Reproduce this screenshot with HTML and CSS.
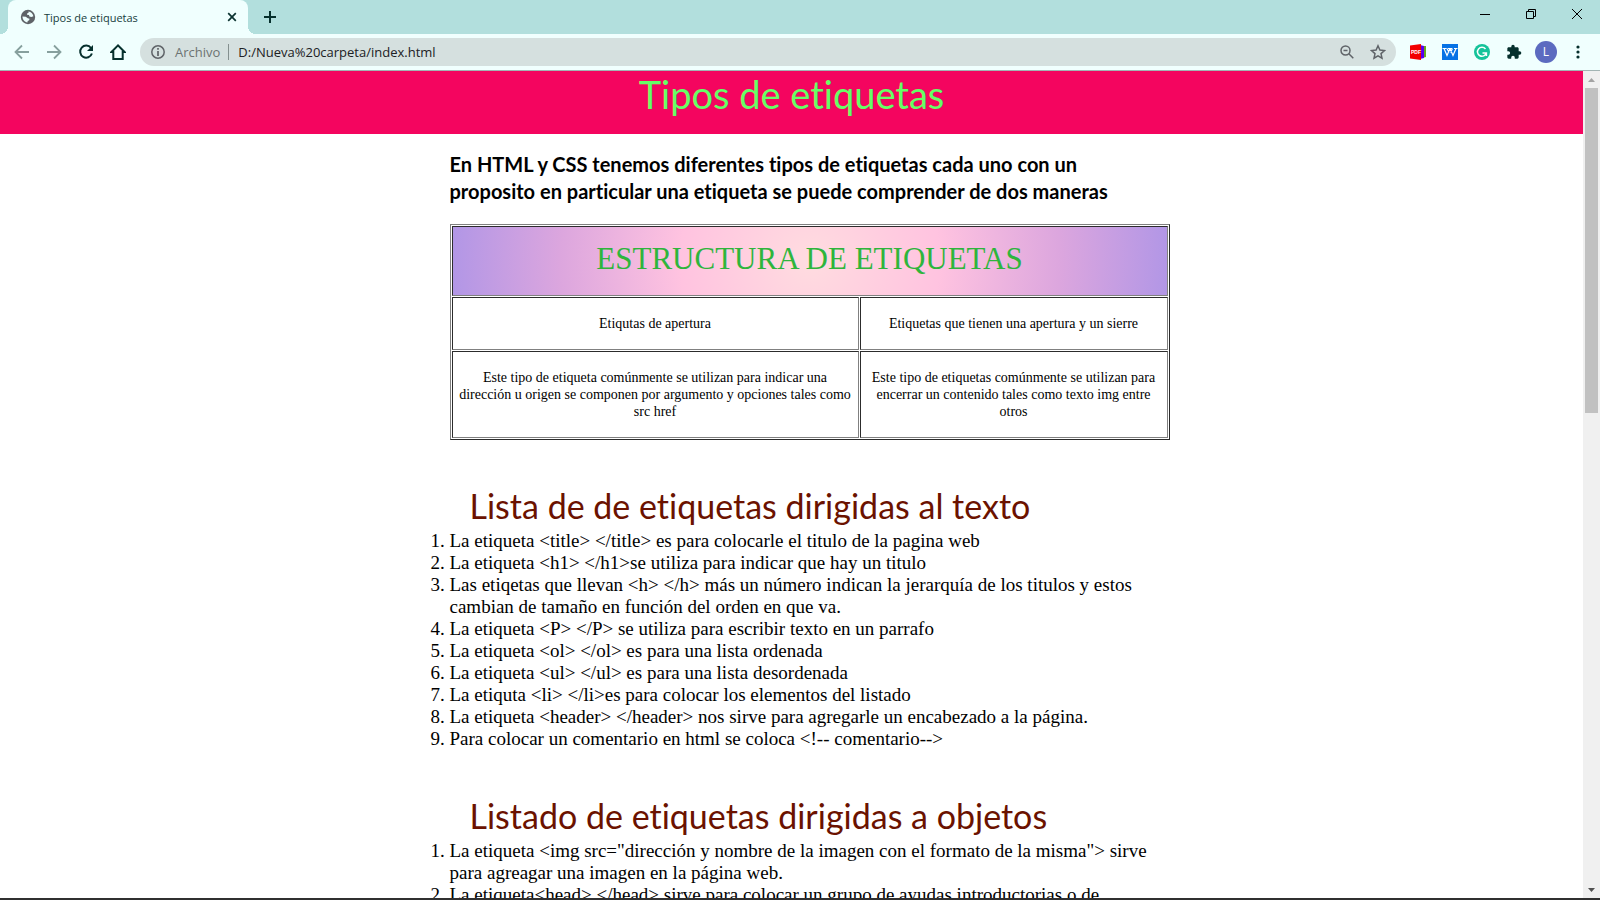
FILE: index.html
```html
<!DOCTYPE html>
<html lang="es">
<head>
<meta charset="utf-8">
<title>Tipos de etiquetas</title>
<link rel="stylesheet" href="styles.css">
</head>
<body>
<div class="browser">
  <div class="tabstrip">
    <div class="tab">
      <svg class="globe" viewBox="0 0 16 16" width="16" height="16"><circle cx="8" cy="8" r="7.200" fill="#5f6368"/><path d="M8.500 2.600c2.400.3 4.400 2.200 4.900 4.600l-2 .9-2-.5-.4-1.500-2-.3.3-1.600 1.300-.5zM2.500 7.500l3.300.2 2 1.600 1.700.4-.3 1.600-1.500.6-.3 1.500C4.700 13 2.500 10.700 2.500 7.500z" fill="#eefffe"/></svg>
      <span class="tab-title">Tipos de etiquetas</span>
      <button class="tab-close" aria-label="Cerrar pestaña"><svg viewBox="0 0 10 10" width="10" height="10"><path d="M1.200 1.200l7.600 7.600M8.800 1.200L1.200 8.800" stroke="#0b3330" stroke-width="1.700"/></svg></button>
    </div>
    <button class="new-tab" aria-label="Nueva pestaña"><svg viewBox="0 0 12 12" width="12" height="12"><path d="M6 0v12M0 6h12" stroke="#06302d" stroke-width="2"/></svg></button>
    <div class="window-controls">
      <button aria-label="Minimizar"><svg viewBox="0 0 10 10" width="10" height="10"><path d="M0 5.500h10" stroke="#000"/></svg></button>
      <button aria-label="Restaurar"><svg viewBox="0 0 10 10" width="10" height="10"><path d="M.5 2.500h7v7h-7zM2.500 2.500v-2h7v7h-2" fill="none" stroke="#000"/></svg></button>
      <button aria-label="Cerrar"><svg viewBox="0 0 10 10" width="10" height="10"><path d="M0 0l10 10M10 0L0 10" stroke="#000"/></svg></button>
    </div>
  </div>

  <div class="toolbar">
    <div class="nav">
      <button aria-label="Atrás"><svg viewBox="0 0 16 16" width="16" height="16"><path d="M15 8H2M8 1.500L1.500 8 8 14.500" fill="none" stroke="#87a09e" stroke-width="1.800"/></svg></button>
      <button aria-label="Adelante"><svg viewBox="0 0 16 16" width="16" height="16"><path d="M1 8h13M8 1.500L14.500 8 8 14.500" fill="none" stroke="#87a09e" stroke-width="1.800"/></svg></button>
      <button aria-label="Volver a cargar"><svg viewBox="0 0 16 16" width="16" height="16"><path d="M13 4A6 6 0 1 0 13.900 9.500" fill="none" stroke="#06302d" stroke-width="2"/><path d="M15 1v6H9z" fill="#06302d"/></svg></button>
      <button aria-label="Página principal"><svg viewBox="0 0 16 16" width="16" height="16"><path d="M8 1.400L1.500 8H3.300v7h9.400V8h1.800z" fill="none" stroke="#06302d" stroke-width="2"/></svg></button>
    </div>
    <div class="omnibox">
      <svg viewBox="0 0 14 14" width="14" height="14"><circle cx="7" cy="7" r="6.200" fill="none" stroke="#5f6368" stroke-width="1.500"/><path d="M7 3v1.700M7 6v5" stroke="#5f6368" stroke-width="1.700"/></svg>
      <label class="scheme" for="url">Archivo</label>
      <input class="url" id="url" type="text" value="D:/Nueva%20carpeta/index.html">
      <button aria-label="Zoom"><svg viewBox="0 0 14 14" width="14" height="14"><circle cx="5.500" cy="5.500" r="4.500" fill="none" stroke="#5f6368" stroke-width="1.500"/><path d="M3.500 5.500h4M8.800 8.800l4.500 4.500" stroke="#5f6368" stroke-width="1.500"/></svg></button>
      <button aria-label="Añadir a marcadores"><svg viewBox="0 0 16 16" width="16" height="16"><path d="M8 1.800l1.900 4.300 4.600.4-3.500 3.100 1 4.600L8 11.800l-4 2.400 1-4.600L1.500 6.500l4.600-.4z" fill="none" stroke="#5f6368" stroke-width="1.500"/></svg></button>
    </div>
    <div class="extensions">
      <button aria-label="Extensión PDF"><svg viewBox="0 0 16 16" width="16" height="16"><path d="M12 2h4v11l-4 1z" fill="#69a81c"/><path d="M10 1l4 1v12l-4 1z" fill="#5a00ee"/><path d="M0 1.500L11 0v16L0 14.500z" fill="#f20000"/><text x="1" y="10" font-size="5" class="pdf">PDF</text></svg></button>
      <button aria-label="Traductor"><svg viewBox="0 0 16 16" width="16" height="16"><path d="M0 0h16v16H0z" fill="#0772e5"/><path d="M.5 4.500h4M6 4.500h4M12 4.500h3.500M2 4.500l3 7 3-7M5 4.500l2 4M8 4.500l3 7 3-7M8.500 8.500l2-4" fill="none" stroke="#fff" stroke-width="1.200"/></svg></button>
      <button aria-label="Corrector"><svg viewBox="0 0 16 16" width="16" height="16"><circle cx="8" cy="8" r="8" fill="#15c39a"/><path d="M11.500 5A4.500 4.500 0 1 0 12.300 9H8.500M12.400 8.500V12" fill="none" stroke="#fff" stroke-width="1.500"/></svg></button>
      <button aria-label="Extensiones"><svg viewBox="0 0 24 24" width="16" height="16"><path fill="#06302d" d="M20.500 11H19V7c0-1.100-.9-2-2-2h-4V3.500a2.500 2.500 0 0 0-5 0V5H4c-1.100 0-2 .9-2 2v3.800h1.500a2.700 2.700 0 0 1 0 5.400H2V20c0 1.100.9 2 2 2h3.800v-1.500a2.700 2.700 0 0 1 5.400 0V22H17c1.100 0 2-.9 2-2v-4h1.500a2.500 2.500 0 0 0 0-5z"/></svg></button>
      <button aria-label="Perfil"><span class="avatar">L</span></button>
      <button aria-label="Menú"><svg viewBox="0 0 4 14" width="4" height="14"><circle cx="2" cy="2" r="1.600" fill="#06302d"/><circle cx="2" cy="7" r="1.600" fill="#06302d"/><circle cx="2" cy="12" r="1.600" fill="#06302d"/></svg></button>
    </div>
  </div>

  <div class="viewport">
    <div class="page">
      <header class="banner"><h1>Tipos de etiquetas</h1></header>
      <main class="content">
        <h2 class="intro">En HTML y CSS tenemos diferentes tipos de etiquetas cada uno con un<br>proposito en particular una etiqueta se puede comprender de dos maneras</h2>
        <table class="structure">
          <colgroup><col class="col-open"><col></colgroup>
          <tr><th class="table-title" colspan="2">ESTRUCTURA DE ETIQUETAS</th></tr>
          <tr><td>Etiqutas de apertura</td><td>Etiquetas que tienen una apertura y un sierre</td></tr>
          <tr><td>Este tipo de etiqueta comúnmente se utilizan para indicar una<br>dirección u origen se componen por argumento y opciones tales como<br>src href</td><td>Este tipo de etiquetas comúnmente se utilizan para encerrar un contenido tales como texto img entre otros</td></tr>
        </table>
        <section class="group">
          <h2 class="group-title">Lista de de etiquetas dirigidas al texto</h2>
          <ol>
            <li>La etiqueta &lt;title&gt; &lt;/title&gt; es para colocarle el titulo de la pagina web</li>
            <li>La etiqueta &lt;h1&gt; &lt;/h1&gt;se utiliza para indicar que hay un titulo</li>
            <li>Las etiqetas que llevan &lt;h&gt; &lt;/h&gt; más un número indican la jerarquía de los titulos y estos cambian de tamaño en función del orden en que va.</li>
            <li>La etiqueta &lt;P&gt; &lt;/P&gt; se utiliza para escribir texto en un parrafo</li>
            <li>La etiqueta &lt;ol&gt; &lt;/ol&gt; es para una lista ordenada</li>
            <li>La etiqueta &lt;ul&gt; &lt;/ul&gt; es para una lista desordenada</li>
            <li>La etiquta &lt;li&gt; &lt;/li&gt;es para colocar los elementos del listado</li>
            <li>La etiqueta &lt;header&gt; &lt;/header&gt; nos sirve para agregarle un encabezado a la página.</li>
            <li>Para colocar un comentario en html se coloca &lt;!-- comentario--&gt;</li>
          </ol>
        </section>
        <section class="group">
          <h2 class="group-title">Listado de etiquetas dirigidas a objetos</h2>
          <ol>
            <li>La etiqueta &lt;img src="dirección y nombre de la imagen con el formato de la misma"&gt; sirve para agreagar una imagen en la página web.</li>
            <li>La etiqueta&lt;head&gt; &lt;/head&gt; sirve para colocar un grupo de ayudas introductorias o de</li>
          </ol>
        </section>
      </main>
    </div>
    <div class="scrollbar">
      <svg viewBox="0 0 17 17" width="17" height="17"><path d="M5 11h7L8.500 7z" fill="#a3a3a3"/></svg>
      <div class="track"><div class="thumb"></div></div>
      <svg viewBox="0 0 17 17" width="17" height="17"><path d="M5 7h7l-3.500 4z" fill="#505050"/></svg>
    </div>
  </div>
  <div class="taskbar"></div>
</div>
</body>
</html>
```
FILE: styles.css
```css
* { box-sizing: border-box; }
body { margin: 0; background: #fff; color: #000; font-family: "Liberation Serif", "Times New Roman", serif; }
button { display: flex; align-items: center; justify-content: center; padding: 0; border: 0; background: none; font: inherit; }
svg { display: block; flex: none; }

.browser { display: flex; flex-direction: column; height: 100vh; overflow: hidden; }

.tabstrip { display: flex; flex: none; height: 34px; padding-left: 8px; background: #b2dfdd; font-family: "Open Sans", sans-serif; }
.tab { position: relative; display: flex; align-items: center; width: 240px; padding: 0 11px 0 12px; border-radius: 8px 8px 0 0; background: #f0fffe; }
.tab::before, .tab::after { content: ""; position: absolute; bottom: 0; width: 8px; height: 8px; }
.tab::before { right: 100%; background: radial-gradient(circle at 0 0, transparent 8px, #f0fffe 8px); }
.tab::after { left: 100%; background: radial-gradient(circle at 100% 0, transparent 8px, #f0fffe 8px); }
.tab-title { flex: 1; padding-left: 8px; color: #17403d; font-size: 11px; }
.new-tab { width: 44px; }
.window-controls { display: flex; margin-left: auto; height: 28px; }
.window-controls button { width: 46px; }

.toolbar { display: flex; flex: none; align-items: center; height: 37px; padding: 0 6px 0 14px; border-bottom: 1px solid #a3b5b4; background: #f0fffe; font-family: "Open Sans", sans-serif; }
.nav { display: flex; gap: 16px; }
.omnibox { display: flex; flex: 1; align-items: center; height: 28px; margin: 0 6px 0 14px; padding: 0 10px 0 11px; border-radius: 14px; background: #d5e0df; font-size: 13px; }
.omnibox button { margin-left: 16px; }
.scheme { margin-left: 10px; padding-right: 8px; border-right: 1px solid #84908f; color: #6c7372; line-height: 16px; }
.url { flex: 1; min-width: 0; padding: 0 0 0 9px; border: 0; outline: 0; background: none; color: #202124; font: inherit; }
.extensions { display: flex; align-items: center; }
.extensions button { width: 32px; }
.pdf { fill: #fff; font-family: "Liberation Sans", sans-serif; font-weight: bold; }
.avatar { width: 22px; height: 22px; border-radius: 50%; background: #5c6bc0; color: #fff; font-size: 12px; line-height: 22px; }

.viewport { display: flex; flex: 1; min-height: 0; }
.page { flex: 1; overflow: hidden; }
.banner { height: 63px; background: #f4055f; text-align: center; }
h1, h2, ol { margin: 0; font-family: "Lato", sans-serif; font-weight: normal; font-variant-ligatures: none; }
.banner h1 { color: #66ff66; font-size: 38px; line-height: 46px; }

.content { width: 756px; margin: 0 auto; padding: 17px 0 0 36px; }
.intro { font-size: 20px; font-weight: bold; line-height: 27px; white-space: nowrap; }
.structure { width: 100%; margin-top: 19px; border: 1px solid; border-color: #808080 #2c2c2c #2c2c2c #808080; border-spacing: 1px; table-layout: fixed; font-size: 14px; line-height: 17px; text-align: center; }
.col-open { width: 407px; }
.structure td, .structure th { padding: 17px 1px; border: 1px solid; border-color: #2c2c2c #808080 #808080 #2c2c2c; }
.structure .table-title { padding: 14px 1px 18px; background: radial-gradient(circle, #ffdce0 0, #ffc3e0 130px, #dca6de 250px, #b196e6 360px); color: #2eb53c; font-size: 31px; font-weight: normal; line-height: 36px; }

.group { padding-top: 45px; }
.group-title { padding: 0 0 3px 20px; color: #6b1200; font-size: 34px; line-height: 42px; white-space: nowrap; }
ol { padding: 0; font-family: inherit; font-size: 19px; line-height: 22px; }

.scrollbar { display: flex; flex-direction: column; width: 17px; background: #f0f0f0; }
.track { flex: 1; padding: 0 2px; }
.thumb { height: 41%; background: #c1c1c1; }
.taskbar { flex: none; height: 2px; background: #303030; }
```
